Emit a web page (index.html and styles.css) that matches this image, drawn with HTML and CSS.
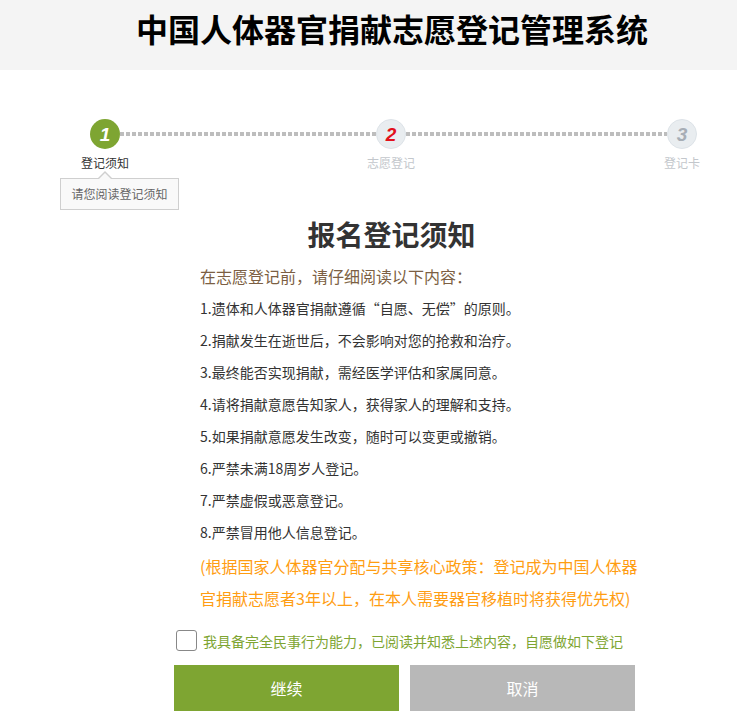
FILE: index.html
```html
<!DOCTYPE html>
<html lang="zh-CN">
<head>
<meta charset="utf-8">
<title>中国人体器官捐献志愿登记管理系统</title>
<link rel="stylesheet" href="styles.css">
</head>
<body>
<header class="header">
  <h1 class="site-title">中国人体器官捐献志愿登记管理系统</h1>
</header>

<section class="steps">
  <div class="step-circle step-active">1</div>
  <div class="step-line"></div>
  <div class="step-circle step-next">2</div>
  <div class="step-line"></div>
  <div class="step-circle step-todo">3</div>

  <div class="step-label label-active"><span>登记须知</span></div>
  <div></div>
  <div class="step-label"><span>志愿登记</span></div>
  <div></div>
  <div class="step-label"><span>登记卡</span></div>

  <div class="tooltip">请您阅读登记须知</div>
</section>

<main class="notice">
  <h2 class="notice-title">报名登记须知</h2>
  <div class="notice-body">
    <p class="intro">在志愿登记前，请仔细阅读以下内容：</p>
    <p class="item">1.遗体和人体器官捐献遵循“自愿、无偿”的原则。</p>
    <p class="item">2.捐献发生在逝世后，不会影响对您的抢救和治疗。</p>
    <p class="item">3.最终能否实现捐献，需经医学评估和家属同意。</p>
    <p class="item">4.请将捐献意愿告知家人，获得家人的理解和支持。</p>
    <p class="item">5.如果捐献意愿发生改变，随时可以变更或撤销。</p>
    <p class="item">6.严禁未满18周岁人登记。</p>
    <p class="item">7.严禁虚假或恶意登记。</p>
    <p class="item">8.严禁冒用他人信息登记。</p>
    <p class="policy">(根据国家人体器官分配与共享核心政策：登记成为中国人体器官捐献志愿者3年以上，在本人需要器官移植时将获得优先权)</p>
  </div>
  <label class="agree">
    <span class="checkbox"></span>
    <span class="agree-text">我具备完全民事行为能力，已阅读并知悉上述内容，自愿做如下登记</span>
  </label>
  <div class="actions">
    <button class="btn btn-primary" type="button">继续</button>
    <button class="btn btn-cancel" type="button">取消</button>
  </div>
</main>
</body>
</html>
```

FILE: styles.css
```css
* { box-sizing: border-box; }
html, body { margin: 0; padding: 0; }
body {
  width: 737px;
  background: #fff;
  font-family: "Noto Sans CJK SC", "Noto Sans", sans-serif;
  color: #333;
}
p, h1, h2 { margin: 0; }

.header {
  height: 70px;
  background: #f4f4f4;
  padding-left: 136px;
}
.site-title {
  font-size: 32px;
  font-weight: bold;
  line-height: 57px;
  color: #000;
  letter-spacing: 0;
}

.steps {
  position: relative;
  margin-top: 49px;
  padding-left: 90px;
  display: grid;
  grid-template-columns: 30px 256px 30px 261px 30px;
  grid-template-rows: 30px 16px;
  row-gap: 6px;
}
.step-circle {
  width: 30px;
  height: 30px;
  border-radius: 50%;
  display: flex;
  align-items: center;
  justify-content: center;
  font-family: "Liberation Sans", Arial, sans-serif;
  font-style: italic;
  font-weight: bold;
  font-size: 19px;
  line-height: 1;
}
.step-active { background: #7ea532; color: #fff; }
.step-next { background: #e9edf0; border: 1px solid #dde3e8; color: #e2101b; }
.step-todo { background: #e9edf0; border: 1px solid #dde3e8; color: #a7aeb6; }
.step-line {
  align-self: center;
  height: 4px;
  background: repeating-linear-gradient(90deg, #bdbdbd 0 4px, transparent 4px 6px);
}
.step-label {
  display: flex;
  justify-content: center;
  font-size: 12px;
  line-height: 16px;
  white-space: nowrap;
  color: #c3c7cc;
}
.label-active { color: #333; }

.tooltip {
  position: absolute;
  left: 60px;
  top: 59px;
  width: 119px;
  height: 32px;
  border: 1px solid #cfcfcf;
  background: #f9f9f9;
  color: #666;
  font-size: 12px;
  line-height: 30px;
  text-align: center;
}
.tooltip::before,
.tooltip::after {
  content: "";
  position: absolute;
  left: 37px;
  width: 0;
  height: 0;
  border-left: 7px solid transparent;
  border-right: 7px solid transparent;
}
.tooltip::before { top: -8px; border-bottom: 7px solid #cfcfcf; }
.tooltip::after { top: -6px; border-bottom: 7px solid #f9f9f9; }

.notice { margin-top: 43px; }
.notice-title {
  padding-left: 46px;
  text-align: center;
  font-size: 28px;
  font-weight: bold;
  line-height: 40px;
  color: #333;
}
.notice-body {
  margin-top: 6px;
  margin-left: 200px;
  width: 440px;
}
.intro {
  font-size: 16px;
  line-height: 32px;
  color: #7c5f43;
}
.item {
  font-size: 14px;
  line-height: 32px;
  color: #333;
}
.policy {
  margin-top: 2px;
  font-size: 16px;
  line-height: 32px;
  color: #ff9d12;
}
.agree {
  margin-top: 16px;
  margin-left: 176px;
  display: flex;
  align-items: center;
  gap: 6px;
  height: 21px;
}
.checkbox {
  width: 21px;
  height: 21px;
  border: 1px solid #888;
  border-radius: 3px;
  background: #fff;
}
.agree-text {
  font-size: 14px;
  line-height: 20px;
  color: #7ea532;
}
.actions {
  margin-top: 14px;
  margin-left: 174px;
  display: flex;
  gap: 11px;
}
.btn {
  width: 225px;
  height: 46px;
  border: 0;
  color: #fff;
  font-family: "Noto Sans CJK SC", sans-serif;
  font-size: 16px;
  padding: 0;
}
.btn-primary { background: #7ea532; }
.btn-cancel { background: #b8b8b8; }
```
